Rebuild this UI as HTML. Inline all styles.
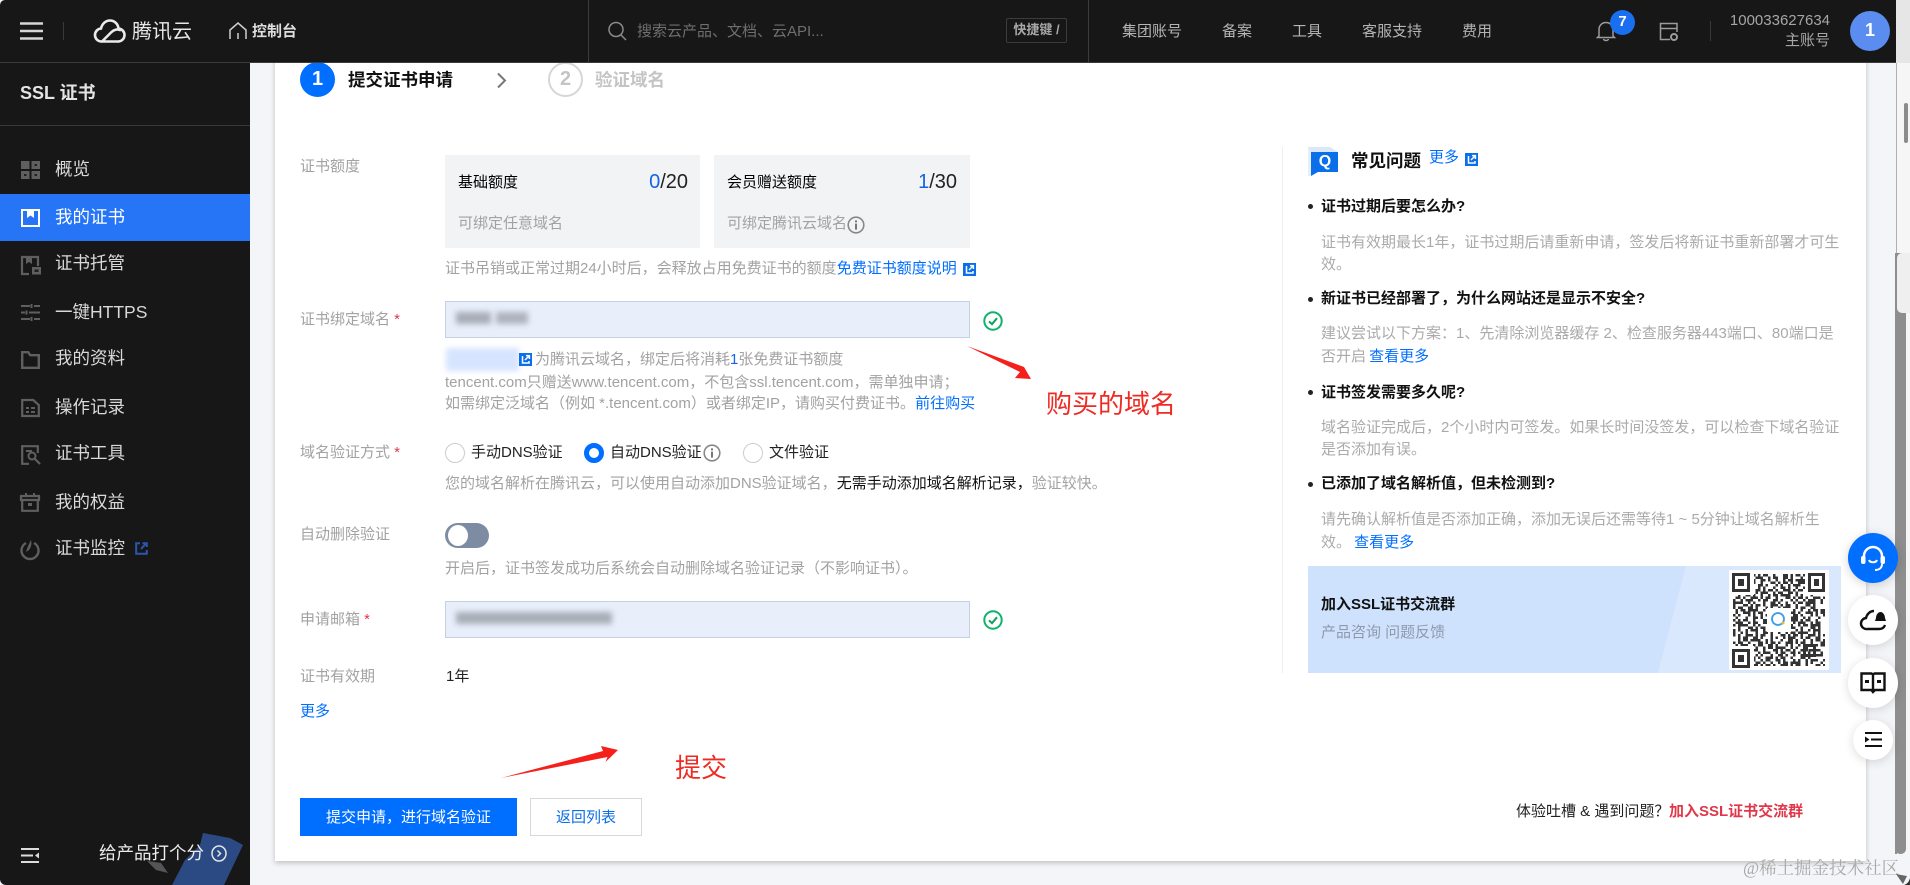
<!DOCTYPE html>
<html lang="zh-CN"><head><meta charset="utf-8"><title>SSL 证书</title>
<style>
*{box-sizing:border-box}
html,body{margin:0;padding:0;width:1910px;height:885px;overflow:hidden;background:#f3f5f8}
body{position:relative;font-family:"Liberation Sans","Noto Sans CJK SC",sans-serif;font-size:15px;color:#000}
.a,.t{position:absolute}
.t{white-space:nowrap;line-height:20px;height:20px}
.g{color:#a2a2a2}
.l{color:#006eff}
.n{color:#b4b4b4}
.s{color:#d9d9d9;font-size:17.5px;left:55px}
.b{font-weight:700;color:#111}
.q{color:#aaa;left:1321px}
.r{color:#e0384a}
svg{position:absolute;display:block;overflow:visible}
.qr{fill:none;stroke:#333;stroke-width:2.5}
</style></head><body>
<svg width="0" height="0" style="left:0;top:0"><defs>
<symbol id="ext" viewBox="0 0 13 13"><path d="M0 0h13v13H0z" fill="#0a6fe8"/><path d="M3.500 3v7h6.500V8M6 7l4-4M7 2.600h3.400V6" fill="none" stroke="#fff" stroke-width="1.500"/></symbol>
<symbol id="info" viewBox="0 0 18 18"><circle cx="9" cy="9" r="7.800" fill="none" stroke="#888" stroke-width="1.600"/><path d="M9 4.400v2M9 7.600v6" stroke="#777" stroke-width="2"/></symbol>
<symbol id="ok" viewBox="0 0 20 20"><circle cx="10" cy="10" r="8.700" fill="none" stroke="#10b26b" stroke-width="2"/><path d="M6 10.400l3 2.800 5-6" fill="none" stroke="#10a060" stroke-width="2"/></symbol>
</defs></svg>

<!-- right-hand strip -->
<div class="a" style="left:1896px;top:0;width:14px;height:63px;background:#e6e6e6"></div>
<div class="a" style="left:1896px;top:63px;width:14px;height:822px;background:#f6f6f6"></div>
<div class="a" style="left:1896px;top:63px;width:1px;height:191px;background:#b0b0b0"></div>
<div class="a" style="left:1895px;top:253px;width:11px;height:601px;background:#8e8e8e;border-radius:0 0 5px 5px"></div>
<div class="a" style="left:1897px;top:253px;width:13px;height:60px;background:#efefef;border-radius:5px 0 0 5px"></div>
<div class="a" style="left:1904px;top:103px;width:4px;height:40px;background:#8c8c8c;border-radius:2px"></div>
<div class="a" style="left:1895px;top:854px;width:15px;height:31px;background:#f3f5f8"></div>

<!-- page background area -->
<div class="a" style="left:250px;top:62px;width:1646px;height:823px;background:#f3f5f8"></div>
<div class="a" style="left:1895px;top:253px;width:2px;height:601px;background:#8e8e8e"></div>

<!-- card -->
<div class="a" style="left:275px;top:40px;width:1591px;height:821px;background:#fff;box-shadow:0 2px 5px rgba(0,0,0,.22)"></div>

<!-- steps -->
<div class="a" style="left:300px;top:62px;width:35px;height:35px;border-radius:50%;background:#006eff;color:#fff;font-weight:700;font-size:20px;line-height:34px;text-align:center">1</div>
<div class="t b" style="left:348px;top:70px;font-size:17.5px">提交证书申请</div>
<svg style="left:496px;top:72px" width="11" height="17" viewBox="0 0 11 17"><path d="M2 1.500l7 7-7 7" fill="none" stroke="#777" stroke-width="2"/></svg>
<div class="a" style="left:548px;top:62px;width:35px;height:35px;border-radius:50%;border:2px solid #d6d6d6;color:#c4c4c4;font-weight:700;font-size:20px;line-height:31px;text-align:center">2</div>
<div class="t" style="left:595px;top:70px;font-size:17.5px;font-weight:700;color:#c4c4c4">验证域名</div>

<!-- quota -->
<div class="t g" style="left:300px;top:157px">证书额度</div>
<div class="a" style="left:445px;top:155px;width:255px;height:93px;background:#f2f3f5"></div>
<div class="a" style="left:714px;top:155px;width:256px;height:93px;background:#f2f3f5"></div>
<div class="t" style="left:458px;top:173px">基础额度</div>
<div class="t" style="right:1222px;top:172px;font-size:20px;color:#222"><span style="color:#1464e6">0</span>/20</div>
<div class="t g" style="left:458px;top:214px">可绑定任意域名</div>
<div class="t" style="left:727px;top:173px">会员赠送额度</div>
<div class="t" style="right:953px;top:172px;font-size:20px;color:#222"><span style="color:#1464e6">1</span>/30</div>
<div class="t g" style="left:727px;top:214px">可绑定腾讯云域名</div>
<svg style="left:847px;top:216px" width="18" height="18"><use href="#info"/></svg>
<div class="t g" style="left:445px;top:259px">证书吊销或正常过期24小时后，会释放占用免费证书的额度<span class="l">免费证书额度说明</span></div>
<svg style="left:963px;top:263px" width="13" height="13"><use href="#ext"/></svg>

<!-- domain -->
<div class="t g" style="left:300px;top:310px">证书绑定域名 <span style="color:#e0384a">*</span></div>
<div class="a" style="left:445px;top:301px;width:525px;height:37px;background:#e8effb;border:1px solid #c6d0e2"></div>
<div class="a" style="left:456px;top:312px;width:35px;height:12px;background:#a8acb6;filter:blur(3px)"></div>
<div class="a" style="left:496px;top:312px;width:32px;height:12px;background:#aeb2bc;filter:blur(3px)"></div>
<svg style="left:983px;top:311px" width="20" height="20"><use href="#ok"/></svg>
<div class="a" style="left:446px;top:348px;width:73px;height:23px;background:#d6e4ff;filter:blur(3px)"></div>
<svg style="left:519px;top:353px" width="13" height="13"><use href="#ext"/></svg>
<div class="t g" style="left:535px;top:350px">为腾讯云域名，绑定后将消耗<span style="color:#1464e6">1</span>张免费证书额度</div>
<div class="t g" style="left:445px;top:373px">tencent.com只赠送www.tencent.com，不包含ssl.tencent.com，需单独申请；</div>
<div class="t g" style="left:445px;top:394px">如需绑定泛域名（例如 *.tencent.com）或者绑定IP，请购买付费证书。<span class="l">前往购买</span></div>

<!-- verify -->
<div class="t g" style="left:300px;top:443px">域名验证方式 <span style="color:#e0384a">*</span></div>
<div class="a" style="left:445px;top:443px;width:20px;height:20px;border-radius:50%;border:1px solid #ccc"></div>
<div class="t" style="left:471px;top:443px;color:#222">手动DNS验证</div>
<div class="a" style="left:584px;top:443px;width:20px;height:20px;border-radius:50%;border:5px solid #006eff;background:#fff"></div>
<div class="t" style="left:610px;top:443px;color:#222">自动DNS验证</div>
<svg style="left:703px;top:444px" width="18" height="18"><use href="#info"/></svg>
<div class="a" style="left:743px;top:443px;width:20px;height:20px;border-radius:50%;border:1px solid #ccc"></div>
<div class="t" style="left:769px;top:443px;color:#222">文件验证</div>
<div class="t g" style="left:445px;top:474px">您的域名解析在腾讯云，可以使用自动添加DNS验证域名，<span style="color:#111">无需手动添加域名解析记录，</span>验证较快。</div>

<!-- toggle -->
<div class="t g" style="left:300px;top:525px">自动删除验证</div>
<div class="a" style="left:445px;top:523px;width:44px;height:25px;border-radius:13px;background:#7e8ca3"></div>
<div class="a" style="left:448px;top:525px;width:20px;height:21px;border-radius:50%;background:#fff"></div>
<div class="t g" style="left:445px;top:559px">开启后，证书签发成功后系统会自动删除域名验证记录（不影响证书）。</div>

<!-- email -->
<div class="t g" style="left:300px;top:610px">申请邮箱 <span style="color:#e0384a">*</span></div>
<div class="a" style="left:445px;top:601px;width:525px;height:37px;background:#e8effb;border:1px solid #c6d0e2"></div>
<div class="a" style="left:456px;top:612px;width:156px;height:12px;background:#a9adb7;filter:blur(3px)"></div>
<svg style="left:983px;top:610px" width="20" height="20"><use href="#ok"/></svg>
<div class="t g" style="left:300px;top:667px">证书有效期</div>
<div class="t" style="left:446px;top:667px;color:#222">1年</div>
<div class="t l" style="left:300px;top:702px">更多</div>

<!-- annotations -->
<svg style="left:0;top:0" width="1910" height="885"><path d="M501 778L603 751 601 746 618 750 605.500 762 607.500 757Z" fill="#f5201b"/><path d="M967 346L1024 367 1031 379 1015 378 1020 372Z" fill="#f5201b"/></svg>
<div class="a" style="left:675px;top:750px;font-size:26px;line-height:36px;white-space:nowrap;color:#ee2a22">提交</div>
<div class="a" style="left:1046px;top:386px;font-size:26px;line-height:36px;white-space:nowrap;color:#ee2a22">购买的域名</div>

<!-- buttons -->
<div class="a" style="left:300px;top:798px;width:217px;height:38px;background:#006eff;color:#fff;text-align:center;line-height:39px">提交申请，进行域名验证</div>
<div class="a" style="left:530px;top:798px;width:112px;height:38px;border:1px solid #d5d8dd;color:#0a6fe8;text-align:center;line-height:37px;background:#fff">返回列表</div>
<div class="t" style="left:1516px;top:802px;color:#222">体验吐槽 &amp; 遇到问题？</div>
<div class="t r" style="left:1669px;top:802px;font-weight:700">加入SSL证书交流群</div>

<!-- FAQ -->
<div class="a" style="left:1282px;top:147px;width:1px;height:526px;background:#eeeeee"></div>
<svg style="left:1308px;top:147px" width="30" height="30" viewBox="0 0 30 30"><path d="M0 0h22l8 5H3z" fill="#dbe8fb"/><path d="M3 5h27v20H10l-7 4z" fill="#0a6fe8"/><path d="M0 0h3v29H0z" fill="#dbe8fb" opacity=".7"/></svg>
<div class="a" style="left:1315px;top:150px;width:20px;text-align:center;color:#fff;font-size:16px;font-weight:700;line-height:24px">Q</div>
<div class="t b" style="left:1351px;top:151px;font-size:17.5px">常见问题</div>
<div class="t l" style="left:1429px;top:148px">更多</div>
<svg style="left:1465px;top:153px" width="13" height="13"><use href="#ext"/></svg>

<div class="a" style="left:1308px;top:204px;width:5px;height:5px;border-radius:50%;background:#222"></div>
<div class="t b" style="left:1321px;top:197px">证书过期后要怎么办?</div>
<div class="t q" style="top:233px">证书有效期最长1年，证书过期后请重新申请，签发后将新证书重新部署才可生</div>
<div class="t q" style="top:255px">效。</div>
<div class="a" style="left:1308px;top:297px;width:5px;height:5px;border-radius:50%;background:#222"></div>
<div class="t b" style="left:1321px;top:289px">新证书已经部署了，为什么网站还是显示不安全?</div>
<div class="t q" style="top:323.500px">建议尝试以下方案：1、先清除浏览器缓存 2、检查服务器443端口、80端口是</div>
<div class="t q" style="top:347px">否开启 <span class="l" style="margin-left:-1px">查看更多</span></div>
<div class="a" style="left:1308px;top:390px;width:5px;height:5px;border-radius:50%;background:#222"></div>
<div class="t b" style="left:1321px;top:383px">证书签发需要多久呢?</div>
<div class="t q" style="top:417.500px">域名验证完成后，2个小时内可签发。如果长时间没签发，可以检查下域名验证</div>
<div class="t q" style="top:440px">是否添加有误。</div>
<div class="a" style="left:1308px;top:482px;width:5px;height:5px;border-radius:50%;background:#222"></div>
<div class="t b" style="left:1321px;top:474px">已添加了域名解析值，但未检测到?</div>
<div class="t q" style="top:510px">请先确认解析值是否添加正确，添加无误后还需等待1 ~ 5分钟让域名解析生</div>
<div class="t q" style="top:533px">效。 <span class="l" style="margin-left:-1px">查看更多</span></div>

<!-- banner -->
<div class="a" style="left:1308px;top:566px;width:533px;height:107px;background:#cfe2fd"></div>
<div class="a" style="left:1658px;top:566px;width:183px;height:107px;background:#d9e8fd;clip-path:polygon(28px 0,100% 0,100% 100%,0 100%)"></div>
<div class="t b" style="left:1321px;top:595px;font-size:15px">加入SSL证书交流群</div>
<div class="t" style="left:1321px;top:623px;color:#8d99ad">产品咨询 问题反馈</div>
<svg style="left:1729px;top:570px" width="100" height="100" viewBox="0 0 100 100">
<rect width="100" height="100" fill="#fff"/>
<svg x="4" y="4" width="92" height="92" viewBox="0 0 92 92" style="overflow:hidden">
<path class="qr" stroke-dasharray="2.500 2.500 5 2.500 2.500 5 7.500 2.500 2.500 2.500 5 5 2.500 7.500 5 2.500" d="M-5 1.250h130M-17.500 8.750h130M-32.500 16.250h130M-2.500 23.750h130M-45 31.250h130M-10 38.750h130M-25 46.250h130M-40 53.750h130M-7.500 61.250h130M-30 68.750h130M-15 76.250h130M-50 83.750h130M-35 91.250h130"/>
<path class="qr" stroke-dasharray="5 2.500 2.500 7.500 2.500 2.500 2.500 5 2.500 2.500 7.500 5 2.500 2.500 5 5" d="M-12.500 3.750h130M-37.500 11.250h130M-7.500 18.750h130M-22.500 26.250h130M-47.500 33.750h130M-2.500 41.250h130M-32.500 48.750h130M-17.500 56.250h130M-42.500 63.750h130M-27.500 71.250h130M-5 78.750h130M-20 86.250h130"/>
<path class="qr" stroke-dasharray="2.500 5 2.500 2.500 5 2.500 10 5 2.500 2.500 2.500 7.500 2.500 5 5 2.500 2.500 5" d="M-30 6.250h130M-10 13.750h130M-45 21.250h130M-20 28.750h130M-5 36.250h130M-37.500 43.750h130M-15 51.250h130M-27.500 58.750h130M-2.500 66.250h130M-50 73.750h130M-12.500 81.250h130M-35 88.750h130"/>
</svg>
<path fill="#fff" d="M2 2h23v23H2zM76 2h23v23H76zM2 76h23v23H2zM38 38h24v24H38z"/>
<path fill="#333" fill-rule="evenodd" d="M3 3h18v19H3zM6 6v13h12V6zM9 9h6v7H9zM79 3h17v19H79zM82 6v13h11V6zM85 9h5v7h-5zM3 79h18v19H3zM6 82v13h12V82zM9 85h6v7H9zM74 74h13v13H74zM77 77v7h7v-7zM79.500 79h2v3h-2z"/>
<circle cx="49" cy="49" r="6" fill="none" stroke="#3a9be8" stroke-width="1.800"/><circle cx="54" cy="53" r="1.500" fill="#e8b93a"/>
</svg>

<!-- floating buttons -->
<div class="a" style="left:1848px;top:533px;width:50px;height:50px;border-radius:50%;background:#006eff;box-shadow:0 2px 10px rgba(0,0,0,.18)"></div>
<svg style="left:1859px;top:545px" width="28" height="28" viewBox="0 0 28 28"><path d="M5 14V11a9 9 0 0 1 18 0v3" fill="none" stroke="#fff" stroke-width="2.500"/><rect x="2" y="11" width="4.500" height="8" rx="2" fill="#fff"/><rect x="21.500" y="11" width="4.500" height="8" rx="2" fill="#fff"/><path d="M10 15c1 3 7 3 8 0M23 19c0 4-3 6-7 6" fill="none" stroke="#fff" stroke-width="2"/></svg>
<div class="a" style="left:1848px;top:595px;width:50px;height:50px;border-radius:50%;background:#fff;box-shadow:0 2px 10px rgba(0,0,0,.14)"></div>
<svg style="left:1859px;top:607px" width="28" height="26" viewBox="0 0 28 26"><path d="M8 22a5.500 5.500 0 0 1-1-11c1-4 4-7 8-7M8 22h12c3 0 5-1 6-4" fill="none" stroke="#111" stroke-width="2.400"/><path d="M17 11c0-3 2-6 4.500-6S26 8 26 11l1 3H16z" fill="#111"/></svg>
<div class="a" style="left:1848px;top:658px;width:50px;height:50px;border-radius:50%;background:#fff;box-shadow:0 2px 10px rgba(0,0,0,.14)"></div>
<svg style="left:1860px;top:671px" width="26" height="24" viewBox="0 0 26 24"><path d="M1.500 2.500h10l1.500 1 1.500-1h10V19h-9.500L13 21l-1.500-2H1.500zM13 4v15" fill="none" stroke="#111" stroke-width="2.400"/><path d="M5 9h4v3H5zM17 9h4v3h-4z" fill="#111"/></svg>
<div class="a" style="left:1853px;top:720px;width:40px;height:40px;border-radius:50%;background:#fff;box-shadow:0 2px 10px rgba(0,0,0,.14)"></div>
<svg style="left:1865px;top:731px" width="17" height="17" viewBox="0 0 17 17"><path d="M0 2h17M6 8.500h11M0 15h17" stroke="#111" stroke-width="2"/><path d="M0 5.500l4.500 3-4.500 3z" fill="#111"/></svg>

<!-- watermark -->
<div class="t" style="left:1743px;top:858px;font-size:17.5px;color:#a9a9a9;font-family:'Liberation Serif','Noto Serif CJK SC',serif">@稀土掘金技术社区</div>
<svg style="left:1892px;top:866px" width="18" height="19" viewBox="0 0 18 19"><path d="M4 8l11 2-4 8z" fill="#666"/><path d="M18 12v7h-6c3-1 5-3 6-7z" fill="#333"/></svg>

<!-- top bar -->
<div class="a" style="left:0;top:0;width:1896px;height:63px;background:#171717;border-bottom:1px solid #3c3c3c;border-top-left-radius:5px"></div>
<svg style="left:20px;top:22px" width="23" height="18"><path d="M0 1.500h23M0 9h23M0 16.500h23" stroke="#d6d6d6" stroke-width="2.400"/></svg>
<div class="a" style="left:63px;top:22px;width:1px;height:18px;background:#3a3a3a"></div>
<svg style="left:93px;top:19px" width="33" height="24" viewBox="0 0 33 24"><path d="M9 22.500a6.500 6.500 0 0 1-1-13C9 5 12.500 1.500 17 1.500s8 3.500 8.500 8a6.500 6.500 0 0 1-1 13zM9 22.500l9-9c3-3 7-4 10-2" fill="none" stroke="#eaeaea" stroke-width="2.600"/></svg>
<div class="t" style="left:132px;top:21px;font-size:20px;line-height:22px;height:22px;color:#e8e8e8">腾讯云</div>
<svg style="left:229px;top:22px" width="18" height="17" viewBox="0 0 18 17"><path d="M1 17V8l8-7 8 7v9M9 11v6" fill="none" stroke="#cfcfcf" stroke-width="1.500"/></svg>
<div class="t" style="left:252px;top:22px;color:#dedede;font-weight:700">控制台</div>
<div class="a" style="left:588px;top:0;width:1px;height:62px;background:#3c3c3c"></div>
<svg style="left:608px;top:21px" width="19" height="20" viewBox="0 0 19 20"><circle cx="8" cy="8.500" r="7" fill="none" stroke="#8a8a8a" stroke-width="1.500"/><path d="M13 14l5 5" stroke="#8a8a8a" stroke-width="1.500"/></svg>
<div class="t" style="left:637px;top:22px;color:#6f6f6f;width:190px;overflow:hidden">搜索云产品、文档、云API...</div>
<div class="a" style="left:1006px;top:18px;width:61px;height:25px;border:1px solid #3c3c3c;border-radius:2px;color:#a8a8a8;font-size:13px;line-height:22px;text-align:center;white-space:nowrap;font-weight:700">快捷键 /</div>
<div class="a" style="left:1088px;top:0;width:1px;height:62px;background:#3c3c3c"></div>
<div class="t n" style="left:1122px;top:22px">集团账号</div>
<div class="t n" style="left:1222px;top:22px">备案</div>
<div class="t n" style="left:1292px;top:22px">工具</div>
<div class="t n" style="left:1362px;top:22px">客服支持</div>
<div class="t n" style="left:1462px;top:22px">费用</div>
<svg style="left:1597px;top:20px" width="18" height="22" viewBox="0 0 18 22"><path d="M2 16V9.500C2 5.500 5 2.500 9 2.500s7 3 7 7V16l1.500 1.500H.5zM6.500 19c.5 2 4.500 2 5 0" fill="none" stroke="#9c9c9c" stroke-width="1.500"/></svg>
<div class="a" style="left:1610px;top:10px;width:25px;height:25px;border-radius:50%;background:#1a6ff0;color:#fff;font-size:15px;font-weight:700;line-height:24px;text-align:center">7</div>
<svg style="left:1659px;top:22px" width="20" height="20" viewBox="0 0 20 20"><path d="M18 10V1.500H1.500v16H11M1.500 6.500H18" fill="none" stroke="#9c9c9c" stroke-width="1.500"/><circle cx="15" cy="15" r="3" fill="none" stroke="#9c9c9c" stroke-width="2"/></svg>
<div class="a" style="left:1710px;top:21px;width:1px;height:20px;background:#3a3a3a"></div>
<div class="t" style="right:80px;top:11px;color:#a6a6a6">100033627634</div>
<div class="t" style="right:80px;top:31px;color:#a6a6a6">主账号</div>
<div class="a" style="left:1850px;top:11px;width:40px;height:40px;border-radius:50%;background:#5b8cf0;color:#fff;font-size:18px;font-weight:700;line-height:39px;text-align:center">1</div>

<!-- sidebar -->
<div class="a" style="left:0;top:62px;width:250px;height:823px;background:#171717;border-top:1px solid #3c3c3c;border-bottom-left-radius:6px;overflow:hidden">
<div class="a" style="left:0;top:62px;width:250px;height:1px;background:#383838"></div>
<svg style="left:172px;top:769px" width="72" height="53" viewBox="0 0 72 53"><path d="M31 1L58 6 71 13 52 53H0L13 28 28 13Z" fill="#2b4a84"/></svg>
<svg style="left:147px;top:798px" width="21" height="12" viewBox="0 0 21 12"><path d="M0 0l14 2 7 10-12-3z" fill="#555"/></svg>
</div>
<div class="t" style="left:20px;top:83px;font-size:18px;font-weight:700;color:#e4e4e4">SSL 证书</div>
<div class="a" style="left:0;top:194px;width:250px;height:47px;background:#2575f6"></div>

<svg style="left:21px;top:161px" width="19" height="18" viewBox="0 0 19 18"><path d="M0 0h8.500v8H0zM10.500 0H19v8h-8.500zM0 10h8.500v8H0zM10.500 10H19v8h-8.500z" fill="#5f5f5f"/><path d="M3 13h2.500v2H3zM13.500 13H16v2h-2.500zM13.500 3H16v2h-2.500z" fill="#202020"/></svg>
<div class="t s" style="top:159px">概览</div>

<svg style="left:21px;top:209px" width="19" height="18" viewBox="0 0 19 18"><path d="M1 1h17v16H1z" fill="none" stroke="#fff" stroke-width="2"/><path d="M6 1h7v8l-3.500-2.500L6 9z" fill="#fff"/></svg>
<div class="t s" style="top:207px;color:#fff">我的证书</div>

<svg style="left:21px;top:256px" width="20" height="19" viewBox="0 0 20 19"><path d="M8 18H1V1h16v9" fill="none" stroke="#5f5f5f" stroke-width="2.200"/><path d="M5 1h6v7L8 6 5 8z" fill="#5f5f5f"/><path d="M11 11h9v7.500h-9z" fill="#5f5f5f"/><path d="M13.500 13.500h4v2.500h-4z" fill="#202020"/></svg>
<div class="t s" style="top:253px">证书托管</div>

<svg style="left:21px;top:304px" width="19" height="17" viewBox="0 0 19 17"><path d="M0 2h9M13 2h6M0 8.500h4M8 8.500h11M0 15h9M13 15h6" stroke="#5f5f5f" stroke-width="2"/><path d="M10.500 0v4M5.500 6.500v4M10.500 13v4" stroke="#5f5f5f" stroke-width="2"/></svg>
<div class="t s" style="top:302px">一键HTTPS</div>

<svg style="left:21px;top:351px" width="19" height="18" viewBox="0 0 19 18"><path d="M1.200 16.800V1.200h6l2 3h8.600v12.600z" fill="none" stroke="#5f5f5f" stroke-width="2.400"/></svg>
<div class="t s" style="top:348px">我的资料</div>

<svg style="left:21px;top:399px" width="19" height="18" viewBox="0 0 19 18"><path d="M1.200 1h11l5.600 5v11H1.200z" fill="none" stroke="#5f5f5f" stroke-width="2.200"/><path d="M5 8h3v2H5zM10 8h4v2h-4zM5 12h3v2H5zM10 12h4v2h-4z" fill="#5f5f5f"/></svg>
<div class="t s" style="top:397px">操作记录</div>

<svg style="left:21px;top:445px" width="20" height="20" viewBox="0 0 20 20"><path d="M8 18.800H1.200V1.200h15.600V8" fill="none" stroke="#5f5f5f" stroke-width="2.200"/><circle cx="11" cy="11" r="3.500" fill="none" stroke="#5f5f5f" stroke-width="2"/><path d="M13.500 13.500l5.500 5.500" stroke="#5f5f5f" stroke-width="2.200"/><path d="M5 5h6v2H5z" fill="#5f5f5f"/></svg>
<div class="t s" style="top:443px">证书工具</div>

<svg style="left:20px;top:493px" width="20" height="19" viewBox="0 0 20 19"><path d="M1 3h18v4H1zM2.200 7v10.800h15.600V7" fill="none" stroke="#5f5f5f" stroke-width="2.200"/><path d="M5 0h2v3H5zM13 0h2v3h-2zM8 10h4v3H8z" fill="#5f5f5f"/></svg>
<div class="t s" style="top:492px">我的权益</div>

<svg style="left:20px;top:540px" width="20" height="20" viewBox="0 0 20 20"><path d="M6 3a8.500 8.500 0 1 0 8 0" fill="none" stroke="#5f5f5f" stroke-width="2.400"/><path d="M11 0c1 4 0 7-2 10l-3 2c1-4 3-8 5-12z" fill="#5f5f5f"/></svg>
<div class="t s" style="top:538px">证书监控</div>
<svg style="left:135px;top:542px" width="13" height="13" viewBox="0 0 13 13"><path d="M5 1.200H1.200v10.600h10.600V8M6 7l5-5.500M7.500 1.200h4.300V5" fill="none" stroke="#2a56b0" stroke-width="2"/></svg>

<svg style="left:21px;top:848px" width="18" height="15" viewBox="0 0 18 15"><path d="M0 1h18M0 7.500h12M0 14h18" stroke="#dcdcdc" stroke-width="2"/><path d="M18 4.500v6l-4-3z" fill="#dcdcdc"/></svg>
<div class="t" style="left:99px;top:843px;font-size:17.5px;color:#ececec">给产品打个分</div>
<svg style="left:211px;top:845px" width="16" height="17" viewBox="0 0 16 17"><ellipse cx="8" cy="8.500" rx="7" ry="7.500" fill="none" stroke="#e4e4e4" stroke-width="1.500"/><path d="M6.500 5.500l3 3-3 3" fill="none" stroke="#e4e4e4" stroke-width="1.500"/></svg>
</body></html>
